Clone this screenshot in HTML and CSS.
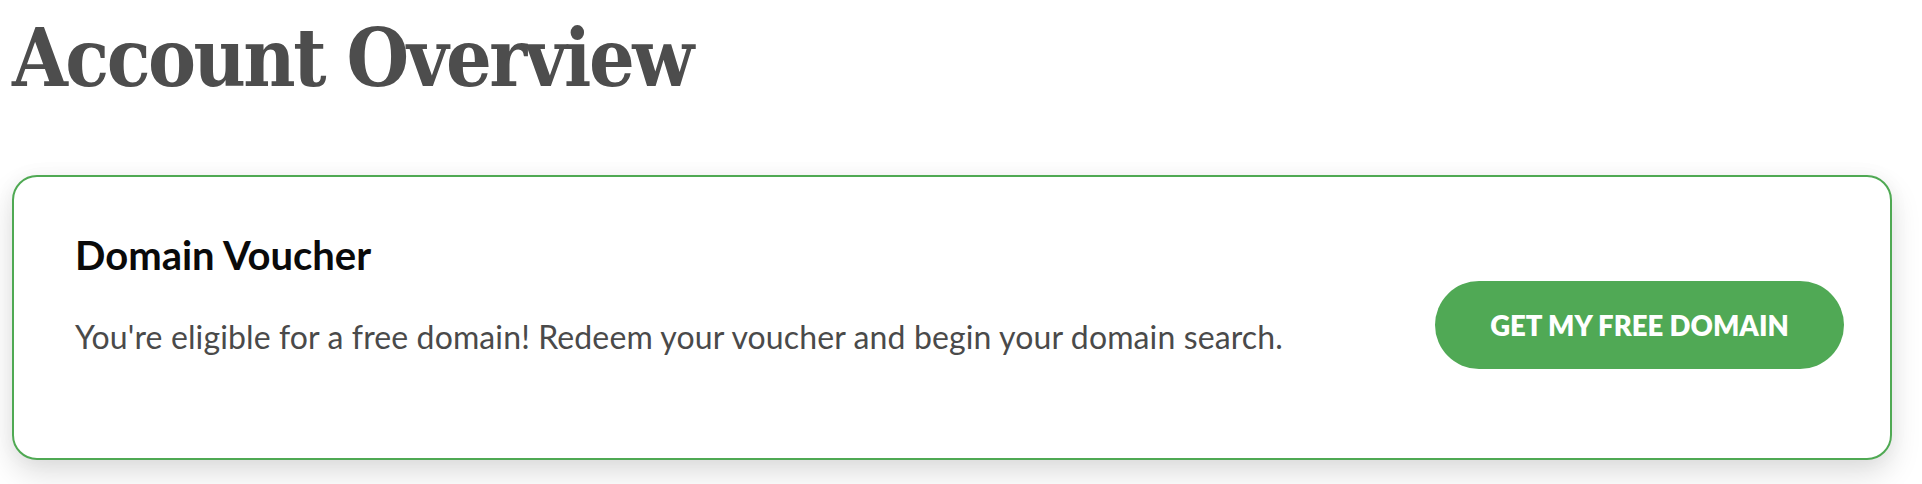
FILE: index.html
```html
<!DOCTYPE html>
<html lang="en">
<head>
<meta charset="utf-8">
<title>Account Overview</title>
<link rel="stylesheet" href="styles.css">
</head>
<body>
<main class="page">
  <h1 class="page-title">Account Overview</h1>
  <section class="voucher-card">
    <div class="voucher-text">
      <h2 class="voucher-title">Domain Voucher</h2>
      <p class="voucher-desc">You're eligible for a free domain! Redeem your voucher and begin your domain search.</p>
    </div>
    <a class="voucher-btn" href="#">GET MY FREE DOMAIN</a>
  </section>
</main>
</body>
</html>
```

FILE: styles.css
```css
html, body {
  margin: 0;
  padding: 0;
  background: #ffffff;
}

.page {
  padding: 0 30px 40px 12px;
}

.page-title {
  margin: 0;
  padding-top: 13px;
  height: 175px;
  box-sizing: border-box;
  font-family: "DejaVu Serif", serif;
  font-stretch: condensed;
  font-weight: bold;
  font-size: 80px;
  line-height: 90px;
  letter-spacing: -2.5px;
  color: #4d4d4d;
}

.voucher-card {
  display: flex;
  align-items: flex-start;
  justify-content: space-between;
  height: 285px;
  box-sizing: border-box;
  border: 2px solid #4fa953;
  border-radius: 25px;
  background: #ffffff;
  box-shadow: 0 14px 30px rgba(0, 0, 0, 0.13), 0 0 20px rgba(0, 0, 0, 0.04);
  padding: 54px 46px 0 61px;
}

.voucher-text {
  display: flex;
  flex-direction: column;
  gap: 39px;
}

.voucher-title {
  margin: 0;
  font-family: Lato, "Noto Sans", sans-serif;
  font-weight: 700;
  font-size: 40px;
  line-height: 48px;
  color: #0a0a0a;
}

.voucher-desc {
  margin: 0;
  font-family: Lato, "Noto Sans", sans-serif;
  font-size: 32px;
  line-height: 38px;
  letter-spacing: 0.12px;
  color: #4a4a4a;
}

.voucher-btn {
  display: flex;
  align-items: center;
  justify-content: center;
  width: 409px;
  height: 88px;
  border-radius: 44px;
  background: #50a955;
  color: #ffffff;
  text-decoration: none;
  font-family: Lato, "Noto Sans", sans-serif;
  font-weight: 800;
  font-size: 27.5px;
  margin-top: 50px;
}
```
